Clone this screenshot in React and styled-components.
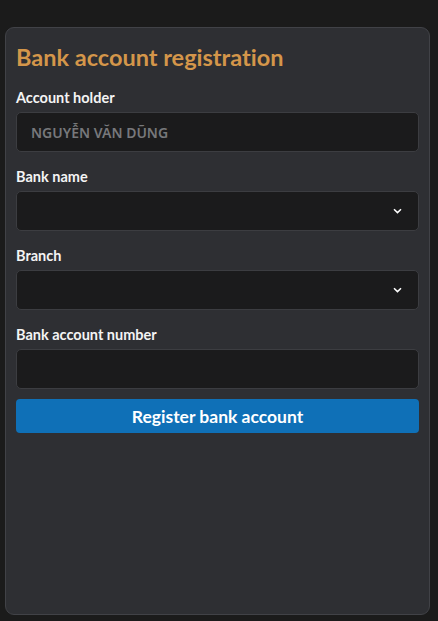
import React from 'react';
import styled, { createGlobalStyle } from 'styled-components';

const GlobalStyle = createGlobalStyle`
  html, body {
    margin: 0;
    padding: 0;
    background: #1b1b1b;
    font-family: Lato, "Noto Sans", sans-serif;
    font-variant-ligatures: none;
  }
  * { box-sizing: border-box; }
`;

const Page = styled.div`
  padding: 27px 8px 6px 5px;
  height: 621px;
`;

const Card = styled.div`
  height: 100%;
  background: #2e2f33;
  border: 1px solid #414247;
  border-radius: 9px;
  padding: 14px 10px 10px 10px;
  display: flex;
  flex-direction: column;
`;

const Title = styled.h1`
  margin: 0 0 17px 0;
  font-size: 23.5px;
  font-weight: 700;
  color: #d4964a;
  line-height: 30px;
  font-variant-ligatures: none;
`;

const Field = styled.div`
  display: flex;
  flex-direction: column;
  margin-bottom: 16px;
`;

const Label = styled.label`
  display: block;
  height: 18px;
  font-size: 14.5px;
  font-weight: 700;
  color: #f4f4f4;
  line-height: 18px;
  margin-bottom: 5px;
`;

const Input = styled.input`
  display: block;
  height: 40px;
  width: 100%;
  background: #1b1b1c;
  border: 1px solid #3c3d41;
  border-radius: 5px;
  padding: 0 14px;
  font-family: "Noto Sans", sans-serif;
  font-size: 14px;
  font-weight: 600;
  color: #e8e8e8;
  outline: none;
  &::placeholder {
    color: #77787b;
  }
`;

const SelectBox = styled.div`
  position: relative;
  height: 40px;
  background: #1b1b1c;
  border: 1px solid #3c3d41;
  border-radius: 5px;
`;

const Chevron = styled.svg`
  position: absolute;
  right: 16px;
  top: 50%;
  transform: translateY(-50%);
`;

const Button = styled.button`
  height: 34px;
  margin-top: -6px;
  width: 100%;
  border: none;
  border-radius: 4px;
  background: #0f70b7;
  color: #ffffff;
  font-family: inherit;
  font-size: 17.5px;
  font-weight: 700;
  cursor: pointer;
`;

function Select() {
  return (
    <SelectBox>
      <Chevron width="9" height="6" viewBox="0 0 9 6">
        <path d="M1 1.2 L4.5 4.6 L8 1.2" fill="none" stroke="#ffffff" strokeWidth="1.5" />
      </Chevron>
    </SelectBox>
  );
}

export default function App() {
  return (
    <>
      <GlobalStyle />
      <Page>
        <Card>
          <Title>Bank account registration</Title>
          <Field>
            <Label>Account holder</Label>
            <Input placeholder="NGUYỄN VĂN DŨNG" />
          </Field>
          <Field>
            <Label>Bank name</Label>
            <Select />
          </Field>
          <Field>
            <Label>Branch</Label>
            <Select />
          </Field>
          <Field>
            <Label>Bank account number</Label>
            <Input />
          </Field>
          <Button>Register bank account</Button>
        </Card>
      </Page>
    </>
  );
}
